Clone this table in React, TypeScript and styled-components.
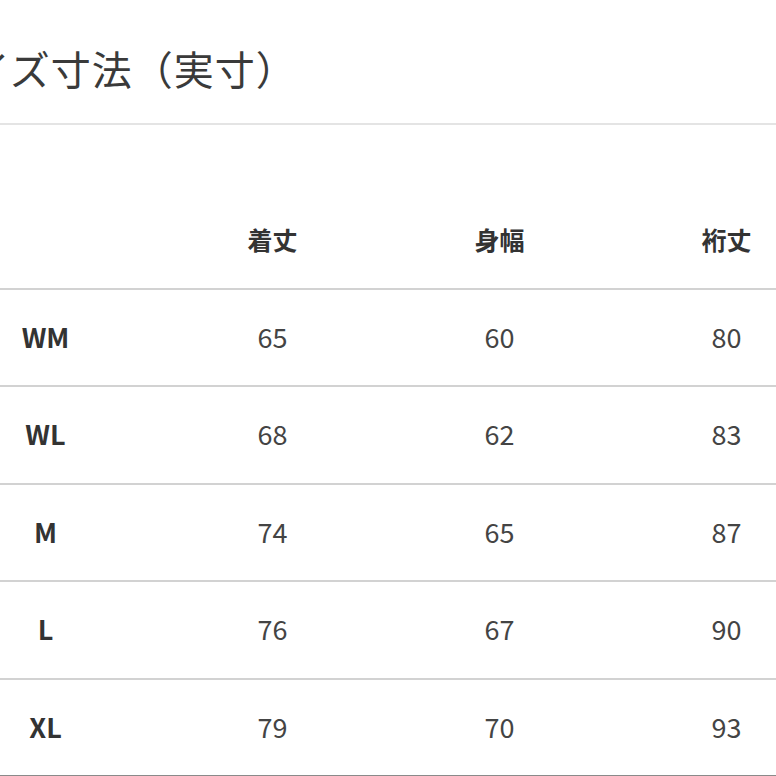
import React from "react";
import styled, { createGlobalStyle } from "styled-components";

const Global = createGlobalStyle`
  html, body {
    margin: 0;
    padding: 0;
    background: #ffffff;
    overflow: hidden;
  }
  body {
    font-family: "Noto Sans CJK JP", "Noto Sans", sans-serif;
    color: #333333;
  }
`;

const Page = styled.div`
  width: 908px;
  margin-left: -68px;
`;

const Title = styled.h2`
  margin: 0;
  padding: 38px 0 25px;
  font-size: 40px;
  line-height: 60px;
  font-weight: 400;
  color: #3a3a3a;
  letter-spacing: 1px;
  margin-left: -3px;
  border-bottom: 2px solid #e4e4e4;
`;

const Table = styled.div`
  margin-top: 67px;
  display: grid;
  grid-template-columns: repeat(4, 227px);
`;

const Row = styled.div<{ $last?: boolean }>`
  display: contents;
`;

const Cell = styled.div<{ $kind: "head" | "label" | "value"; $line: string }>`
  height: 97.5px;
  box-sizing: border-box;
  display: flex;
  align-items: center;
  justify-content: center;
  border-bottom: 2px solid ${(p) => p.$line};
  font-size: ${(p) => (p.$kind === "head" ? "25px" : "27px")};
  font-weight: ${(p) => (p.$kind === "value" ? 400 : 700)};
  color: ${(p) => (p.$kind === "value" ? "#444444" : "#333333")};
  padding-bottom: 2px;
`;

const heads = ["", "着丈", "身幅", "裄丈"];
const rows: [string, number, number, number][] = [
  ["WM", 65, 60, 80],
  ["WL", 68, 62, 83],
  ["M", 74, 65, 87],
  ["L", 76, 67, 90],
  ["XL", 79, 70, 93],
];

export default function App() {
  return (
    <>
      <Global />
      <Page>
        <Title>サイズ寸法（実寸）</Title>
        <Table>
          <Row>
            {heads.map((h, i) => (
              <Cell key={i} $kind="head" $line="#d2d2d2">
                {h}
              </Cell>
            ))}
          </Row>
          {rows.map((r, ri) => (
            <Row key={r[0]}>
              {r.map((v, ci) => (
                <Cell
                  key={ci}
                  $kind={ci === 0 ? "label" : "value"}
                  $line={ri === rows.length - 1 ? "#8a8a8a" : "#d2d2d2"}
                >
                  {v}
                </Cell>
              ))}
            </Row>
          ))}
        </Table>
      </Page>
    </>
  );
}
